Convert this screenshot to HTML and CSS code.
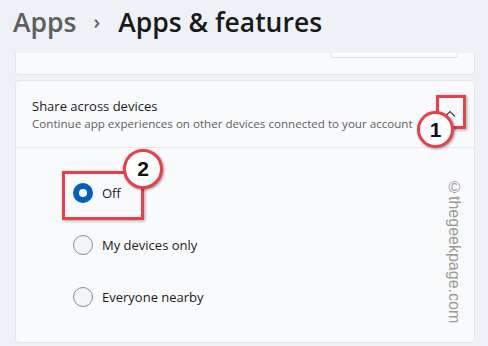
FILE: index.html
```html
<!DOCTYPE html>
<html lang="en">
<head>
    <meta charset="UTF-8">
    <title>Apps &amp; features</title>
    <link rel="stylesheet" href="styles.css">
</head>
<body>

    <div class="cabecalho">
        <span class="pai">Apps</span>
        <span class="seta">&#8250;</span>
        <span class="atual">Apps &amp; features</span>
    </div>

    <div class="cartao-topo">
        <div class="botao-topo"></div>
    </div>

    <div class="cartao">
        <div class="cartao-cabecalho">
            <div class="textos">
                <div class="titulo">Share across devices</div>
                <div class="subtitulo">Continue app experiences on other devices connected to your account</div>
            </div>
            <svg class="chevron" width="12" height="8" viewBox="0 0 12 8">
                <path d="M1 6.5 L6 1.5 L11 6.5" fill="none" stroke="#3b3b3b" stroke-width="1.1"/>
            </svg>
        </div>
        <div class="opcoes">
            <div class="opcao"><span class="radio marcado"></span>Off</div>
            <div class="opcao"><span class="radio"></span>My devices only</div>
            <div class="opcao"><span class="radio"></span>Everyone nearby</div>
            <div class="marca">&copy;thegeekpage.com</div>
        </div>
    </div>

    <div class="caixa caixa-1"></div>
    <div class="numero numero-1">1</div>
    <div class="caixa caixa-2"></div>
    <div class="numero numero-2">2</div>

</body>
</html>
```

FILE: styles.css
```css
* {
    margin: 0;
    padding: 0;
    box-sizing: border-box;
}

body {
    background: #eef2f7;
    font-family: "Segoe UI", "Open Sans", Arial, sans-serif;
    width: 488px;
    height: 346px;
    overflow: hidden;
    position: relative;
    color: #1b1b1b;
}

.cabecalho {
    height: 53px;
    padding: 4px 0 0 13px;
    display: flex;
    align-items: baseline;
    font-size: 26.5px;
    font-weight: 600;
}

.pai {
    color: #5f5f5f;
}

.seta {
    color: #5f5f5f;
    font-size: 20px;
    margin: 0 18px 0 17px;
    position: relative;
    top: -3px;
}

.atual {
    color: #1a1a1a;
}

.cartao-topo {
    margin: 0 13px 0 15px;
    height: 22px;
    background: #f9fafc;
    border: 1px solid #e4e6ea;
    border-top: none;
    border-radius: 0 0 4px 4px;
    display: flex;
    justify-content: flex-end;
    padding-right: 16px;
}

.botao-topo {
    width: 128px;
    height: 5px;
    border: 1px solid #dcdfe3;
    border-top: none;
    border-radius: 0 0 4px 4px;
    background: #fdfdfe;
}

.cartao {
    margin: 5px 13px 0 15px;
    height: 263px;
    background: #f9fafc;
    border: 1px solid #e4e6ea;
    border-radius: 4px;
}

.cartao-cabecalho {
    height: 67px;
    border-bottom: 1px solid #e4e6ea;
    display: flex;
    align-items: center;
    justify-content: space-between;
    padding: 0 18px 0 16px;
}

.titulo {
    font-size: 13px;
    color: #1b1b1b;
    line-height: 18px;
}

.subtitulo {
    font-size: 11.6px;
    color: #5f5f5f;
    line-height: 17px;
}

.opcoes {
    position: relative;
    padding: 35px 0 0 57px;
    display: flex;
    flex-direction: column;
    gap: 32px;
}

.opcao {
    display: flex;
    align-items: center;
    gap: 9px;
    font-size: 13px;
    color: #1b1b1b;
    height: 20px;
}

.radio {
    width: 20px;
    height: 20px;
    border-radius: 50%;
    border: 1px solid #8b8b8b;
    background: #f4f5f7;
}

.radio.marcado {
    border: 6px solid #005fb8;
    background: #ffffff;
}

.marca {
    position: absolute;
    top: 31px;
    left: 429px;
    writing-mode: vertical-rl;
    font-family: Arial, "Liberation Sans", sans-serif;
    font-size: 16px;
    color: #9a9a9a;
}

.caixa {
    position: absolute;
    border: 3px solid #ea3f48;
    box-shadow: 1px 1px 3px rgba(0, 0, 0, 0.35);
}

.caixa-1 {
    left: 436px;
    top: 95px;
    width: 30px;
    height: 34px;
}

.caixa-2 {
    left: 62px;
    top: 171px;
    width: 82px;
    height: 49px;
}

.numero {
    position: absolute;
    border-radius: 50%;
    background: #ffffff;
    border: 3px solid #ea3f48;
    box-shadow: 1px 1px 3px rgba(0, 0, 0, 0.4);
    display: flex;
    align-items: center;
    justify-content: center;
    font-family: Arial, "Liberation Sans", sans-serif;
    font-weight: bold;
    color: #111;
}

.numero-1 {
    left: 417px;
    top: 111px;
    width: 37px;
    height: 37px;
    font-size: 21px;
}

.numero-2 {
    left: 123px;
    top: 149px;
    width: 40px;
    height: 40px;
    font-size: 21px;
}
```
